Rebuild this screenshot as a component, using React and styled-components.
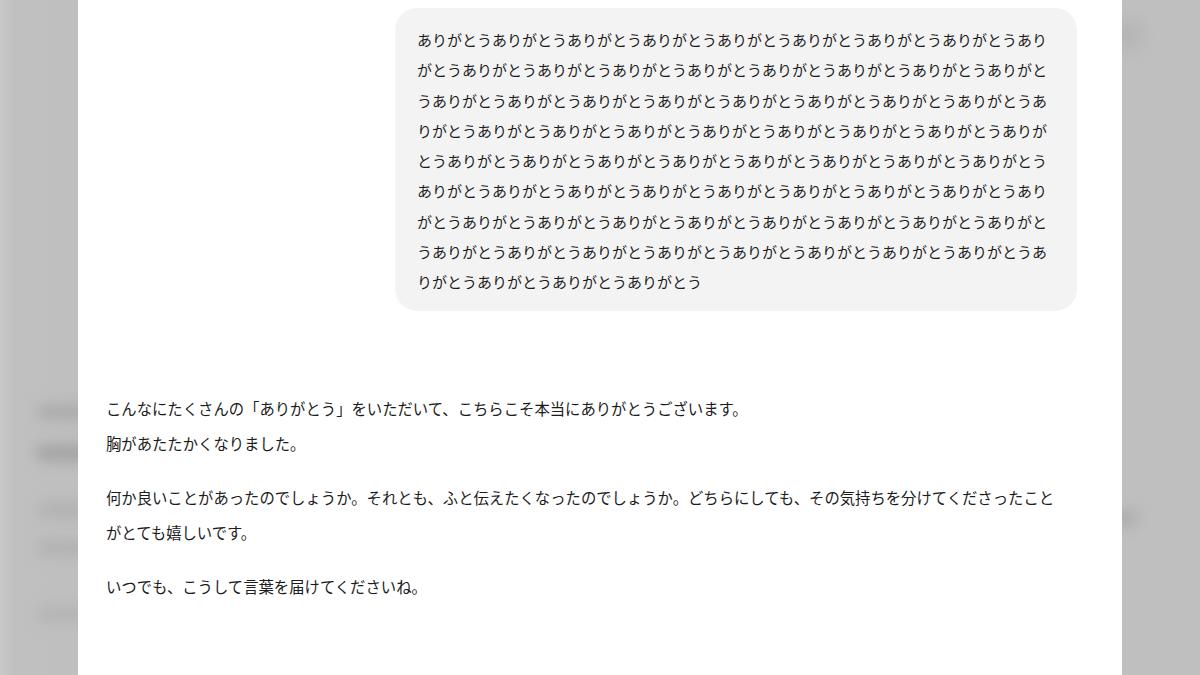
import styled, { createGlobalStyle } from "styled-components";

const GlobalStyle = createGlobalStyle`
  html, body {
    margin: 0;
    padding: 0;
    background: #c0c0c0;
  }
  body {
    font-family: "Noto Sans CJK JP", "Noto Sans", sans-serif;
    color: #1c1c1c;
  }
`;

const Page = styled.div`
  display: flex;
  width: 1200px;
  height: 675px;
  overflow: hidden;
`;

const Backdrop = styled.div`
  flex: 1;
  display: flex;
  flex-direction: column;
  align-items: ${(p) => (p.$side === "left" ? "flex-end" : "flex-start")};
  padding-top: ${(p) => p.$top}px;
  background: ${(p) =>
    p.$side === "left"
      ? "linear-gradient(90deg, #c9c9c9 0, #c0c0c0 14px, #bfbfbf 100%)"
      : "#bfbfbf"};
  overflow: hidden;
`;

const Smudge = styled.div`
  width: ${(p) => p.$w}px;
  height: ${(p) => p.$h}px;
  margin-top: ${(p) => p.$gap}px;
  margin-${(p) => (p.$side === "left" ? "right" : "left")}: -20px;
  background: ${(p) => p.$tone || "#a9a9a9"};
  border-radius: 8px;
  filter: blur(7px);
`;

const Panel = styled.main`
  width: 1044px;
  flex-shrink: 0;
  background: #fff;
  display: flex;
  flex-direction: column;
  padding: 8px 45px 0 28px;
  box-sizing: border-box;
`;

const UserRow = styled.div`
  display: flex;
  justify-content: flex-end;
`;

const Bubble = styled.div`
  width: 640px;
  padding: 17px 20px 14px 21px;
  background: #f3f3f3;
  border-radius: 22px;
  font-size: 15px;
  line-height: 30.25px;
  word-break: break-all;
  box-shadow: -1px 0 1px rgba(0, 0, 0, 0.04);
`;

const Reply = styled.div`
  width: 960px;
  margin-top: 80px;
  font-size: 15.35px;
  line-height: 35px;
`;

const Para = styled.p`
  margin: 0 0 ${(p) => (p.$last ? 0 : 19)}px;
`;

const thanks = "ありがとう".repeat(71);

export default function App() {
  return (
    <>
      <GlobalStyle />
      <Page>
        <Backdrop $side="left" $top={395}>
          <Smudge $side="left" $w={60} $h={14} $gap={10} />
          <Smudge $side="left" $w={62} $h={16} $gap={26} $tone="#a3a3a3" />
          <Smudge $side="left" $w={60} $h={14} $gap={42} $tone="#b0b0b0" />
          <Smudge $side="left" $w={60} $h={14} $gap={24} $tone="#b0b0b0" />
          <Smudge $side="left" $w={60} $h={14} $gap={52} $tone="#b3b3b3" />
        </Backdrop>
        <Panel>
          <UserRow>
            <Bubble>{thanks}</Bubble>
          </UserRow>
          <Reply>
            <Para>
              こんなにたくさんの「ありがとう」をいただいて、こちらこそ本当にありがとうございます。
              <br />
              胸があたたかくなりました。
            </Para>
            <Para>
              何か良いことがあったのでしょうか。それとも、ふと伝えたくなったのでしょうか。どちらにしても、その気持ちを分けてくださったことがとても嬉しいです。
            </Para>
            <Para $last>いつでも、こうして言葉を届けてくださいね。</Para>
          </Reply>
        </Panel>
        <Backdrop $side="right" $top={20}>
          <Smudge $side="right" $w={40} $h={30} $gap={0} $tone="#b6b6b6" />
          <Smudge $side="right" $w={36} $h={16} $gap={460} $tone="#acacac" />
        </Backdrop>
      </Page>
    </>
  );
}
